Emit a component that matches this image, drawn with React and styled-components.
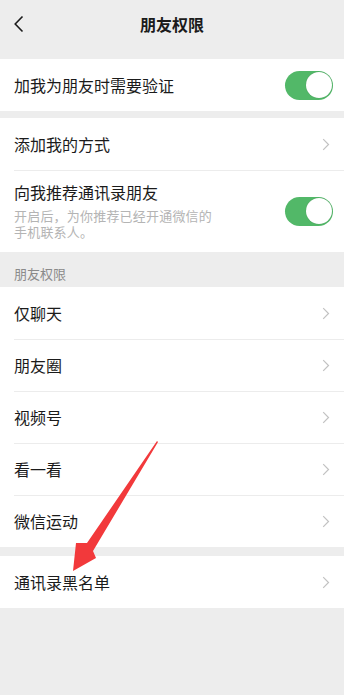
import React from "react";
import styled, { createGlobalStyle } from "styled-components";

const Global = createGlobalStyle`
  html, body { margin: 0; padding: 0; background: #ededed; }
  body { font-family: "Noto Sans CJK SC", "Noto Sans", sans-serif; -webkit-font-smoothing: antialiased; }
  * { box-sizing: border-box; }
`;

const Page = styled.div`
  position: relative;
  width: 344px;
  min-height: 695px;
  background: #ededed;
  display: flex;
  flex-direction: column;
  overflow: hidden;
`;

const NavBar = styled.div`
  height: 48px;
  display: flex;
  align-items: center;
  justify-content: center;
  position: relative;
`;

const BackButton = styled.div`
  position: absolute;
  left: 13px;
  top: 15px;
  width: 12px;
  height: 18px;
  display: flex;
`;

const Title = styled.div`
  font-size: 16px;
  font-weight: 700;
  color: #1b1b1b;
  line-height: 20px;
`;

const Group = styled.div`
  background: #fff;
  margin-top: ${(p) => p.$gap}px;
  display: flex;
  flex-direction: column;
`;

const Row = styled.div`
  min-height: 52px;
  display: flex;
  align-items: center;
  padding: ${(p) => (p.$tall ? "12px" : "0")} 13px ${(p) => (p.$tall ? "12px" : "0")} 14px;
  position: relative;
  &::before {
    content: "";
    display: ${(p) => (p.$divider ? "block" : "none")};
    position: absolute;
    top: 0;
    left: 14px;
    right: 0;
    height: 1px;
    background: #ececec;
  }
`;

const Texts = styled.div`
  flex: 1;
  display: flex;
  flex-direction: column;
`;

const Label = styled.div`
  font-size: 16px;
  line-height: 20px;
  color: #1b1b1b;
`;

const Sub = styled.div`
  margin-top: 6px;
  font-size: 13px;
  line-height: 16px;
  letter-spacing: 0.2px;
  color: #b4b4b4;
  white-space: nowrap;
`;

const Toggle = styled.div`
  width: 48px;
  height: 29px;
  border-radius: 15px;
  background: #52b868;
  position: relative;
  margin-right: -2px;
  flex-shrink: 0;
  &::after {
    content: "";
    position: absolute;
    right: 1.5px;
    top: 1.5px;
    width: 26px;
    height: 26px;
    border-radius: 50%;
    background: #fff;
    box-shadow: 0 0 1px rgba(0, 0, 0, 0.25);
  }
`;

const SectionHeader = styled.div`
  height: 35px;
  display: flex;
  align-items: flex-end;
  padding: 0 14px 4px;
  font-size: 13px;
  line-height: 18px;
  color: #8a8a8a;
`;

const Chevron = () => (
  <svg width="8" height="13" viewBox="0 0 8 13" style={{ flexShrink: 0, marginRight: 1 }}>
    <path d="M1.2 1.2 L6.5 6.5 L1.2 11.8" fill="none" stroke="#c2c2c2" strokeWidth="1.2" />
  </svg>
);

const ArrowOverlay = styled.svg`
  position: absolute;
  left: 0;
  top: 0;
  pointer-events: none;
`;

const items = ["仅聊天", "朋友圈", "视频号", "看一看", "微信运动"];

export default function App() {
  return (
    <>
      <Global />
      <Page>
        <NavBar>
          <BackButton>
            <svg width="12" height="18" viewBox="0 0 12 18">
              <path d="M9.5 1.5 L2.2 9 L9.5 16.5" fill="none" stroke="#1b1b1b" strokeWidth="1.6" />
            </svg>
          </BackButton>
          <Title>朋友权限</Title>
        </NavBar>

        <Group $gap={11}>
          <Row>
            <Texts>
              <Label>加我为朋友时需要验证</Label>
            </Texts>
            <Toggle />
          </Row>
        </Group>

        <Group $gap={7}>
          <Row>
            <Texts>
              <Label>添加我的方式</Label>
            </Texts>
            <Chevron />
          </Row>
          <Row $divider $tall>
            <Texts>
              <Label>向我推荐通讯录朋友</Label>
              <Sub>
                开启后，为你推荐已经开通微信的
                <br />
                手机联系人。
              </Sub>
            </Texts>
            <Toggle />
          </Row>
        </Group>

        <SectionHeader>朋友权限</SectionHeader>

        <Group $gap={0}>
          {items.map((t, i) => (
            <Row key={t} $divider={i > 0}>
              <Texts>
                <Label>{t}</Label>
              </Texts>
              <Chevron />
            </Row>
          ))}
        </Group>

        <Group $gap={9}>
          <Row>
            <Texts>
              <Label>通讯录黑名单</Label>
            </Texts>
            <Chevron />
          </Row>
        </Group>

        <ArrowOverlay width="344" height="695" viewBox="0 0 344 695">
          <polygon
            points="158,442 93,551 96,558 73,571 76,543 87,543 157,441"
            fill="#f2393b"
          />
        </ArrowOverlay>
      </Page>
    </>
  );
}
